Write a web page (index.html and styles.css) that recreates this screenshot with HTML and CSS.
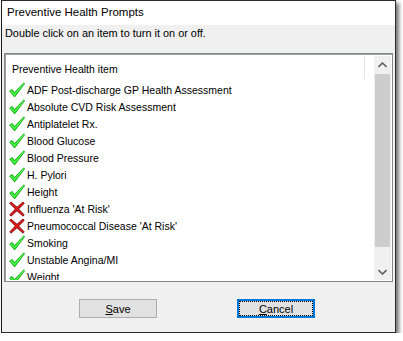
FILE: index.html
```html
<!DOCTYPE html>
<html>
<head>
<meta charset="utf-8">
<link rel="stylesheet" href="styles.css">
</head>
<body>
<div class="dialog">
  <div class="titlebar">Preventive Health Prompts</div>
  <div class="content">
    <div class="hint">Double click on an item to turn it on or off.</div>
    <div class="listbox">
      <div class="listarea">
        <div class="header"><span class="hcell">Preventive Health item</span><span class="hsep"></span></div>
        <div class="rows">
          <div class="row"><svg class="ico" viewBox="0 0 16 16"><use href="#ok"/></svg><span>ADF Post-discharge GP Health Assessment</span></div>
          <div class="row"><svg class="ico" viewBox="0 0 16 16"><use href="#ok"/></svg><span>Absolute CVD Risk Assessment</span></div>
          <div class="row"><svg class="ico" viewBox="0 0 16 16"><use href="#ok"/></svg><span>Antiplatelet Rx.</span></div>
          <div class="row"><svg class="ico" viewBox="0 0 16 16"><use href="#ok"/></svg><span>Blood Glucose</span></div>
          <div class="row"><svg class="ico" viewBox="0 0 16 16"><use href="#ok"/></svg><span>Blood Pressure</span></div>
          <div class="row"><svg class="ico" viewBox="0 0 16 16"><use href="#ok"/></svg><span>H. Pylori</span></div>
          <div class="row"><svg class="ico" viewBox="0 0 16 16"><use href="#ok"/></svg><span>Height</span></div>
          <div class="row"><svg class="ico" viewBox="0 0 16 16"><use href="#no"/></svg><span>Influenza 'At Risk'</span></div>
          <div class="row"><svg class="ico" viewBox="0 0 16 16"><use href="#no"/></svg><span>Pneumococcal Disease 'At Risk'</span></div>
          <div class="row"><svg class="ico" viewBox="0 0 16 16"><use href="#ok"/></svg><span>Smoking</span></div>
          <div class="row"><svg class="ico" viewBox="0 0 16 16"><use href="#ok"/></svg><span>Unstable Angina/MI</span></div>
          <div class="row"><svg class="ico" viewBox="0 0 16 16"><use href="#ok"/></svg><span>Weight</span></div>
        </div>
      </div>
      <div class="scrollbar">
        <div class="sbtn"><svg viewBox="0 0 9 6" width="9" height="6"><path d="M0.5 5 L4.5 1 L8.5 5" fill="none" stroke="#606060" stroke-width="1.6"/></svg></div>
        <div class="thumb"></div>
        <div class="track"></div>
        <div class="sbtn"><svg viewBox="0 0 9 6" width="9" height="6"><path d="M0.5 1 L4.5 5 L8.5 1" fill="none" stroke="#606060" stroke-width="1.6"/></svg></div>
      </div>
    </div>
    <div class="buttons">
      <button class="btn"><u>S</u>ave</button>
      <button class="btn default"><span class="focus"><u>C</u>ancel</span></button>
    </div>
  </div>
</div>
<svg width="0" height="0" class="defs">
  <defs>
    <g id="ok">
      <path d="M0.6 9 L3.2 7.4 L5.4 10.6 L14.8 0.8 L15.6 1.8 L5.6 15 Z" fill="#22f022" stroke="#0a8a0a" stroke-width="0.7" stroke-linejoin="round"/>
      <path d="M1.8 8.8 L5.4 12.6 L14.8 1.6" fill="none" stroke="#7dff7d" stroke-width="0.7"/>
    </g>
    <g id="no">
      <path d="M2 1 L8 6.2 L14 1 L15.2 2.4 L9.6 8 L15.2 13.8 L14 15.2 L8 9.8 L2 15.2 L0.8 13.8 L6.4 8 L0.8 2.4 Z" fill="#e51616" stroke="#6a0000" stroke-width="0.8" stroke-linejoin="round"/>
    </g>
  </defs>
</svg>
</body>
</html>
```
FILE: styles.css
```css
html, body {
  margin: 0;
  padding: 0;
  background: #ffffff;
}
body {
  padding-left: 1px;
  font-family: "Liberation Sans", Arial, sans-serif;
  font-size: 11px;
  color: #000;
}
.defs {
  position: absolute;
  width: 0;
  height: 0;
}
.dialog {
  width: 395px;
  height: 333px;
  box-sizing: border-box;
  border: 1px solid #2b2b2b;
  border-left-color: #1a1a1a;
  box-shadow: 3px 3px 4px rgba(0, 0, 0, 0.55);
  display: flex;
  flex-direction: column;
  background: #f0f0f0;
}
.titlebar {
  height: 24px;
  background: #ffffff;
  font-size: 11.5px;
  line-height: 23px;
  padding-left: 5px;
}
.content {
  flex: 1;
  display: flex;
  flex-direction: column;
  padding: 0 2px 0 2px;
}
.hint {
  height: 28px;
  line-height: 17px;
  padding-left: 1px;
  font-size: 10.9px;
}
.listbox {
  height: 229px;
  box-sizing: border-box;
  border: 1px solid #828790;
  box-shadow: inset 1px 1px 0 #a0a0a0;
  background: #fff;
  display: flex;
  padding: 2px 1px 1px 2px;
  font-size: 10.5px;
}
.listarea {
  flex: 1;
  overflow: hidden;
  display: flex;
  flex-direction: column;
}
.header {
  height: 25px;
  display: flex;
  align-items: center;
  flex-shrink: 0;
}
.hcell {
  width: 357px;
  padding-left: 5px;
  box-sizing: border-box;
  padding-top: 1px;
}
.hsep {
  width: 1px;
  height: 23px;
  background: #e5e5e5;
  align-self: flex-start;
}
.rows {
  display: flex;
  flex-direction: column;
}
.row {
  height: 17px;
  display: flex;
  align-items: center;
  flex-shrink: 0;
  padding-left: 2px;
  white-space: nowrap;
}
.ico {
  width: 16px;
  height: 16px;
  margin-right: 2px;
  flex-shrink: 0;
}
.scrollbar {
  width: 17px;
  display: flex;
  flex-direction: column;
  background: #f0f0f0;
}
.sbtn {
  height: 17px;
  display: flex;
  align-items: center;
  justify-content: center;
  flex-shrink: 0;
}
.thumb {
  height: 173px;
  margin: 1px 1px 0 1px;
  background: #cdcdcd;
  flex-shrink: 0;
}
.track {
  flex: 1;
}
.buttons {
  display: flex;
  gap: 80px;
  padding-left: 75px;
  padding-top: 17px;
}
.btn {
  width: 78px;
  height: 19px;
  box-sizing: border-box;
  border: 1px solid #adadad;
  background: #e1e1e1;
  font-family: "Liberation Sans", Arial, sans-serif;
  font-size: 11px;
  color: #000;
  padding: 0;
  display: flex;
  align-items: center;
  justify-content: center;
}
.btn.default {
  border: 2px solid #0078d7;
  padding: 0;
}
.focus {
  display: flex;
  align-items: center;
  justify-content: center;
  width: 100%;
  height: 100%;
  box-sizing: border-box;
  border: 1px dotted #000;
}
u {
  text-decoration: underline;
  text-underline-offset: 1px;
}
```
